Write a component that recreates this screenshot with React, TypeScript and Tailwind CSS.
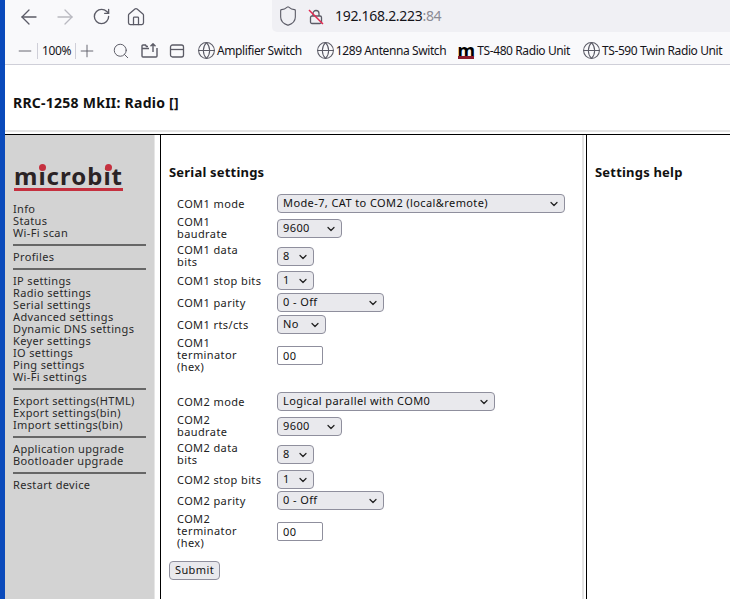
import { ArrowLeft, ArrowRight, RotateCw, Home, Shield, Minus, Plus, Search, Globe, ChevronDown } from 'lucide-react';

const NAV_GROUPS = [
  ['Info', 'Status', 'Wi-Fi scan'],
  ['Profiles'],
  ['IP settings', 'Radio settings', 'Serial settings', 'Advanced settings', 'Dynamic DNS settings', 'Keyer settings', 'IO settings', 'Ping settings', 'Wi-Fi settings'],
  ['Export settings(HTML)', 'Export settings(bin)', 'Import settings(bin)'],
  ['Application upgrade', 'Bootloader upgrade'],
  ['Restart device'],
];

function Bookmark({ label, className }: { label: string; className: string }) {
  return (
    <div className={`flex items-center gap-px ${className}`}>
      <Globe className="w-[19px] h-[19px] text-[#5b5b66]" strokeWidth={1.3} />
      <span>{label}</span>
    </div>
  );
}

function Toolbar() {
  return (
    <div className="h-[65px] shrink-0 bg-[#f9f9fb] border-b border-[#cfcfd8] font-['Open_Sans',sans-serif] text-[#15141a]">
      <div className="h-8 flex items-center">
        <ArrowLeft className="w-6 h-6 ml-3 mt-[1px] text-[#5b5b66]" strokeWidth={1.3} />
        <ArrowRight className="w-6 h-6 ml-3 mt-[1px] text-[#b9b9c0]" strokeWidth={1.3} />
        <RotateCw className="w-[19px] h-[19px] ml-[15px] mt-[1px] text-[#5b5b66]" strokeWidth={1.7} />
        <Home className="w-5 h-5 ml-[15px] mt-[1px] text-[#5b5b66]" strokeWidth={1.5} />
        <div className="h-8 flex-1 ml-[126px] bg-[#f0f0f4] rounded-bl-[5px] flex items-center">
          <Shield className="w-[22px] h-[22px] ml-[5px] text-[#5b5b66]" strokeWidth={1.2} />
          <svg className="ml-[9px] mt-[1px]" width="16" height="16" viewBox="0 0 16 16" fill="none">
            <path d="M5 7V4.5a3 3 0 0 1 6 0V7" stroke="#5b5b66" strokeWidth="1.3" />
            <rect x="2.5" y="7" width="11" height="7.5" rx="1.5" stroke="#5b5b66" strokeWidth="1.3" />
            <path d="M1 1l14 14" stroke="#e22850" strokeWidth="1.5" />
          </svg>
          <span className="ml-[11px] text-[14px] leading-none tracking-[-0.3px]">192.168.2.223<span className="text-[#8b8b94]">:84</span></span>
        </div>
      </div>
      <div className="h-8 pt-[5px] flex items-center text-[12px] tracking-[-0.4px] whitespace-nowrap">
        <Minus className="w-5 h-5 ml-[10px] text-[#5b5b66]" strokeWidth={1.1} />
        <div className="w-px h-4 ml-[2px] bg-[#cfcfd8]" />
        <span className="ml-[4px] w-[28px]">100%</span>
        <div className="w-px h-4 ml-[5px] bg-[#cfcfd8]" />
        <Plus className="w-5 h-5 ml-[1px] text-[#5b5b66]" strokeWidth={1.1} />
        <Search className="w-[18px] h-[18px] ml-[15px] text-[#5b5b66]" strokeWidth={1.3} />
        <svg className="ml-[11px]" width="17" height="16" viewBox="0 0 17 16" fill="none" stroke="#5b5b66" strokeWidth="1.4">
          <path d="M7 3.5H5.5L4.5 2H2a1 1 0 0 0-1 1v10a1 1 0 0 0 1 1h13a1 1 0 0 0 1-1V5" />
          <path d="M1 5.5h7M12 9V1M9.5 3.2L12 .8l2.5 2.4" />
        </svg>
        <svg className="ml-[11px]" width="16" height="16" viewBox="0 0 16 16" fill="none" stroke="#5b5b66" strokeWidth="1.3">
          <rect x="1.5" y="2" width="13" height="12" rx="2" />
          <path d="M1.5 6.5h13" />
        </svg>
        <Bookmark label="Amplifier Switch" className="ml-[12px]" />
        <Bookmark label="1289 Antenna Switch" className="ml-[14px]" />
        <div className="flex items-center gap-[3px] ml-[12px]">
          <div className="w-4 h-4 flex flex-col items-center justify-end">
            <span className="font-['Liberation_Serif',serif] font-bold text-[18px] leading-[12px] tracking-normal text-black">m</span>
            <div className="w-full h-[3px] bg-[#8b1a2b] shrink-0" />
          </div>
          <span>TS-480 Radio Unit</span>
        </div>
        <Bookmark label="TS-590 Twin Radio Unit" className="ml-[12px]" />
      </div>
    </div>
  );
}

function Logo() {
  return (
    <div className="relative h-[33px] mx-[9px] mt-[27px]">
      <div className="font-['DejaVu_Sans',sans-serif] font-bold text-[24px] leading-[28px] text-[#2b2325] tracking-[1px] whitespace-nowrap">microbit</div>
      <div className="absolute left-0 w-[109px] top-[26px] h-[3px] bg-[#c5303f]" />
      <div className="absolute left-[25px] top-[2px] w-[7px] h-[7px] rounded-full bg-[#c5303f]" />
      <div className="absolute left-[91px] top-[2px] w-[7px] h-[7px] rounded-full bg-[#c5303f]" />
    </div>
  );
}

function Sidebar() {
  return (
    <div className="w-[150px] shrink-0 bg-[#d3d3d3] border-r border-[#e6e6e6]">
      <Logo />
      <div className="mt-[8px] ml-2 mr-2">
        {NAV_GROUPS.map((group, i) => (
          <div key={i}>
            {i > 0 && <div className="h-[2px] my-[5px] bg-[#666666]" />}
            {group.map((item) => (
              <div key={item} className="h-3 leading-3 whitespace-nowrap text-[#2a2a2a] tracking-[0.35px]">{item}</div>
            ))}
          </div>
        ))}
      </div>
    </div>
  );
}

function Select({ value, className }: { value: string; className: string }) {
  return (
    <div className={`relative h-[19px] ${className}`}>
      <select defaultValue={value} className="appearance-none w-full h-full bg-[#e9e9ed] border border-[#8f8f9d] rounded-[4px] pl-[5px] text-[11px] tracking-[0.4px] text-[#111] outline-none font-['DejaVu_Sans',sans-serif]">
        <option>{value}</option>
      </select>
      <ChevronDown className="absolute right-[5px] top-[4px] w-3 h-3 text-[#222]" strokeWidth={2.5} />
    </div>
  );
}

function Row({ lines, className, children }: { lines: string[]; className: string; children: React.ReactNode }) {
  return (
    <div className={`flex items-center ${className}`}>
      <div className="w-[100px] shrink-0 leading-3 text-[#222] tracking-[0.4px]">
        {lines.map((l) => (
          <div key={l}>{l}</div>
        ))}
      </div>
      {children}
    </div>
  );
}

function ComForm({ n, mode, modeWidth }: { n: string; mode: string; modeWidth: string }) {
  const first = n === '1';
  return (
    <div className="flex flex-col ml-2">
      <Row lines={[`COM${n} mode`]} className="h-[19px] mb-[3px]"><Select value={mode} className={modeWidth} /></Row>
      <Row lines={[`COM${n}`, 'baudrate']} className="h-6 mb-[4px]"><Select value="9600" className="w-[65px]" /></Row>
      <Row lines={[`COM${n} data`, 'bits']} className={first ? 'h-6 mb-[3px]' : 'h-6 mb-[4px]'}><Select value="8" className="w-[37px]" /></Row>
      <Row lines={[`COM${n} stop bits`]} className={first ? 'h-[19px] mb-[3px]' : 'h-[19px] mb-[2px]'}><Select value="1" className="w-[37px]" /></Row>
      <Row lines={[`COM${n} parity`]} className="h-[19px] mb-[3px]"><Select value="0 - Off" className="w-[107px]" /></Row>
      {first && <Row lines={['COM1 rts/cts']} className="h-[19px] mb-[3px]"><Select value="No" className="w-[49px]" /></Row>}
      <Row lines={[`COM${n}`, 'terminator', '(hex)']} className="h-9">
        <input defaultValue="00" className="w-[46px] h-[19px] border border-[#8f8f9d] rounded-[2px] bg-white pl-[5px] text-[11px] tracking-[0.4px] text-[#111] outline-none font-['DejaVu_Sans',sans-serif]" />
      </Row>
    </div>
  );
}

export default function App() {
  return (
    <div className="w-[730px] h-[599px] flex overflow-hidden bg-white">
      <div className="w-[5px] shrink-0 bg-[#0a4abb]" />
      <div className="flex-1 min-w-0 flex flex-col">
        <Toolbar />
        <div className="h-[67px] shrink-0 flex items-center pl-2 pt-[9px] font-['DejaVu_Sans',sans-serif] font-bold text-[14px] tracking-[0.25px] text-[#111] border-b-2 border-[#e4e4e4]">
          RRC-1258 MkII: Radio []
        </div>
        <div className="h-[2px] shrink-0" />
        <div className="flex-1 flex border-t border-black font-['DejaVu_Sans',sans-serif] text-[11px] min-h-0">
          <Sidebar />
          <div className="w-[5px] shrink-0" />
          <div className="w-[424px] shrink-0 border-l border-r-2 border-l-black border-r-[#e4e4e4] pt-[29px] pl-2">
            <h1 className="font-bold text-[13px] leading-[16px] tracking-[0.2px] text-[#111]">Serial settings</h1>
            <div className="mt-[14px]">
              <ComForm n="1" mode="Mode-7, CAT to COM2 (local&remote)" modeWidth="w-[288px]" />
              <div className="h-[19px]" />
              <ComForm n="2" mode="Logical parallel with COM0" modeWidth="w-[218px]" />
            </div>
            <button className="mt-[12px] w-[51px] h-[19px] bg-[#e9e9ed] border border-[#8f8f9d] rounded-[4px] text-[11px] tracking-[0.4px] text-[#111]">Submit</button>
          </div>
          <div className="w-[2px] shrink-0" />
          <div className="flex-1 border-l border-black pt-[29px] pl-2">
            <h2 className="font-bold text-[13px] leading-[16px] tracking-[0.2px] text-[#111]">Settings help</h2>
          </div>
        </div>
      </div>
    </div>
  );
}
